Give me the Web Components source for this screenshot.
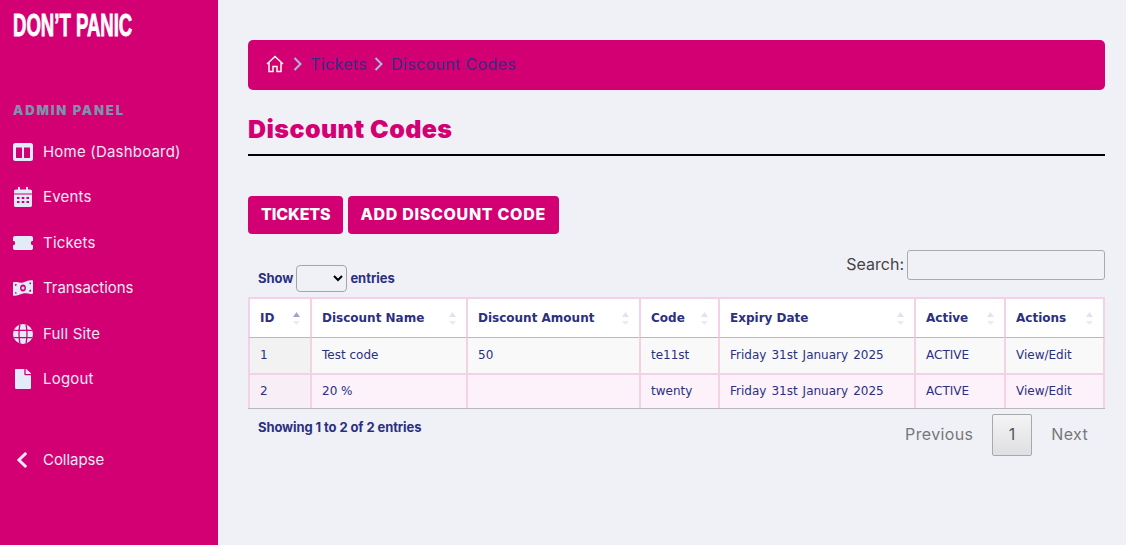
<!DOCTYPE html>
<html><head><meta charset="utf-8"><style>
html,body{margin:0;padding:0;height:100%;background:#f0f1f7;overflow:hidden}
body{font-family:Inter,"Liberation Sans",sans-serif}
</style></head><body>
<dp-app>
<dp-sidebar slot="side">
<dp-nav label="Home (Dashboard)" icon="home"></dp-nav>
<dp-nav label="Events" icon="cal"></dp-nav>
<dp-nav label="Tickets" icon="ticket"></dp-nav>
<dp-nav label="Transactions" icon="money" style="letter-spacing:-.05px"></dp-nav>
<dp-nav label="Full Site" icon="globe"></dp-nav>
<dp-nav label="Logout" icon="file"></dp-nav>
<dp-nav class="collapse" label="Collapse" icon="chev" style="letter-spacing:-.05px"></dp-nav>
</dp-sidebar>
<dp-crumbs></dp-crumbs>
<dp-title>Discount Codes</dp-title>
<dp-actions><dp-btn style="letter-spacing:-.1px;padding-right:12px">TICKETS</dp-btn><dp-btn style="letter-spacing:.68px">ADD DISCOUNT CODE</dp-btn></dp-actions>
<dp-table></dp-table>
</dp-app>
<script>
const def=(n,html,init)=>customElements.define(n,class extends HTMLElement{connectedCallback(){if(this.shadowRoot)return;this.attachShadow({mode:'open'}).innerHTML=typeof html==='function'?html(this):html;}});
def('dp-app',`<style>:host{display:grid;grid-template-columns:218px 1fr;height:545px}
main{padding:40px 21px 0 30px;min-width:0}</style><slot name="side"></slot><main><slot></slot></main>`);
def('dp-sidebar',`<style>:host{display:block;background:#d30074;height:545px;padding:12px 0 0 13px;box-sizing:border-box;color:#f1e8f3}
.logo{font:700 32px/27px "Liberation Sans",sans-serif;color:#fff;height:27px;width:190px;white-space:nowrap;-webkit-text-stroke:.9px #fff;transform-origin:0 0;transform:scaleX(.58)}
h2{margin:64px 0 0;font:900 13px/15px Inter,sans-serif;letter-spacing:1.85px;color:#7e93ab;height:15px}
nav{margin-top:11px}</style>
<div class="logo">DON’T PANIC</div><h2>ADMIN PANEL</h2><nav><slot></slot></nav>`);
const icons={
home:`<svg width="20" height="18" viewBox="0 0 20 18"><path fill-rule="evenodd" fill="#e2ebf8" d="M2.500 0h15A2.500 2.500 0 0 1 20 2.500v13a2.500 2.500 0 0 1-2.500 2.500h-15A2.500 2.500 0 0 1 0 15.500v-13A2.500 2.500 0 0 1 2.500 0zM3 4.500v10.500h6V4.500zM11 4.500v10.500h6V4.500z"/></svg>`,
cal:`<svg width="18" height="20" viewBox="0 0 18 20"><path fill="#e2ebf8" fill-rule="evenodd" d="M4 0h2v2.500h6V0h2v2.500h2.200c1 0 1.800.8 1.800 1.800V6.500H0V4.300c0-1 .8-1.800 1.800-1.800H4zM0 7.500h18v10.700c0 1-.8 1.800-1.800 1.800H1.800c-1 0-1.800-.8-1.800-1.800zM3 10v2h2.500v-2zM7.700 10v2h2.600v-2zM12.500 10v2H15v-2zM3 14v2h2.500v-2zM7.700 14v2h2.600v-2zM12.500 14v2H15v-2z"/></svg>`,
ticket:`<svg width="20" height="14" viewBox="0 0 20 14"><path fill="#e2ebf8" d="M2 0h16c1 0 2 .8 2 1.800V4.800a2.200 2.200 0 0 0 0 4.400v3c0 1-1 1.800-2 1.800H2c-1 0-2-.8-2-1.800v-3a2.200 2.200 0 0 0 0-4.400V1.800C0 .8 1 0 2 0z"/></svg>`,
money:`<svg width="20" height="16" viewBox="0 0 20 16"><path fill="#e2ebf8" fill-rule="evenodd" d="M0 2.500C3 1 6 3.500 10 2.500s6-3 10-2V13.500c-3 1.500-6-1-10 0s-7 3-10 2zM10 4.500c-1.900 0-3 1.600-3 3.500s1.100 3.500 3 3.500 3-1.600 3-3.500-1.100-3.500-3-3.500zM10 6.500a1.500 1.500 0 1 1 0 3 1.500 1.500 0 0 1 0-3zM2 4v2a2 2 0 0 0 2-1.800zM18 2.500v1.800a2 2 0 0 1-2-1.500zM2 12v1.500h2A2 2 0 0 0 2 12zM18 9.500a2 2 0 0 0-2 2l2 .2z"/></svg>`,
globe:`<svg width="20" height="20" viewBox="0 0 20 20"><defs><clipPath id="c"><circle cx="10" cy="10" r="10"/></clipPath></defs><g clip-path="url(#c)"><rect width="20" height="20" fill="#e2ebf8"/><path d="M0 6.400h20M0 13.600h20M7 0C5.800 6 5.800 14 7 20M13 0c1.200 6 1.200 14 0 20" stroke="#d30074" stroke-width="1.300" fill="none"/></g></svg>`,
file:`<svg width="16" height="20" viewBox="0 0 384 512" preserveAspectRatio="none"><path fill="#e2ebf8" d="M224 136V0H24C10.700 0 0 10.700 0 24v464c0 13.300 10.700 24 24 24h336c13.300 0 24-10.700 24-24V160H248c-13.200 0-24-10.800-24-24zm160-14.100v6.100H256V0h6.100c6.400 0 12.500 2.500 17 7l97.900 98c4.500 4.500 7 10.600 7 16.900z"/></svg>`,
chev:`<svg width="12" height="18" viewBox="0 0 320 512" preserveAspectRatio="none"><path fill="#e2ebf8" d="M34.520 239.030L228.870 44.690c9.370-9.370 24.570-9.370 33.940 0l22.670 22.670c9.360 9.360 9.370 24.520.04 33.900L131.490 256l154.020 154.750c9.340 9.380 9.320 24.540-.04 33.900l-22.670 22.670c-9.370 9.370-24.570 9.370-33.940 0L34.520 272.970c-9.370-9.370-9.370-24.570 0-33.940z"/></svg>`};
def('dp-nav',e=>`<style>:host{display:flex;align-items:center;height:45.500px;font:400 15px/20px Inter,sans-serif;color:#f1e8f3;letter-spacing:.2px}
:host(.collapse){margin-top:35px}
i{width:30px;flex:none;display:flex;padding-left:${{file:2,cal:1,chev:3}[e.getAttribute('icon')]||0}px;box-sizing:border-box}</style><i>${icons[e.getAttribute('icon')]}</i><span>${e.getAttribute('label')}</span>`);
def('dp-crumbs',`<style>:host{display:flex;align-items:center;height:50px;box-sizing:border-box;padding-bottom:2px;background:#d30074;border-radius:5px;padding-left:18px;font:400 16px/20px Inter,sans-serif;color:#302f80;letter-spacing:.35px}
svg{display:block}.c{margin:0 8px 0 9px}.c.b{margin:0 8px 0 7px}</style>
<svg width="18" height="18" viewBox="0 0 18 18" fill="none" stroke="#fffbe8" stroke-width="1.500"><path d="M1 9L9 1.500 17 9M3 7.500V16.500H7V11.500H11V16.500H15V7.500"/></svg>
<svg class="c" width="9" height="14" viewBox="0 0 9 14" fill="none" stroke="#a9bbd3" stroke-width="2"><path d="M1.500 1L7.500 7L1.500 13"/></svg><span>Tickets</span>
<svg class="c b" width="9" height="14" viewBox="0 0 9 14" fill="none" stroke="#a9bbd3" stroke-width="2"><path d="M1.500 1L7.500 7L1.500 13"/></svg><span>Discount Codes</span>`);
def('dp-title',`<style>:host{display:block;margin-top:24px;height:40px;border-bottom:2px solid #000;font:900 25px/30px Inter,sans-serif;color:#d30074;letter-spacing:.42px}</style><slot></slot>`);
def('dp-actions',`<style>:host{display:flex;gap:5px;margin-top:40px}</style><slot></slot>`);
def('dp-btn',`<style>:host{display:block;height:38px;padding:0 13px;background:#d30074;color:#fff;border-radius:4px;font:800 16px/37px Inter,sans-serif;white-space:nowrap}</style><slot></slot>`);
const cols=[62,156,173,79,196,90,101];
const heads=['ID','Discount Name','Discount Amount','Code','Expiry Date','Active','Actions'];
const rows=[['1','Test code','50','te11st','Friday 31st January 2025','ACTIVE','View/Edit'],['2','20 %','','twenty','Friday 31st January 2025','ACTIVE','View/Edit']];
const arrows=(a)=>`<svg class="s" width="9" height="15" viewBox="0 0 9 15"><path d="M4.500 1L8 6H1z" fill="${a?'#9fa5cc':'#e2e3f0'}"/><path d="M4.500 14L8 10H1z" fill="#e9eaf3"/></svg>`;
def('dp-table',`<style>:host{display:block;margin-top:16px;font:400 12px/14px "DejaVu Sans",Verdana,sans-serif;color:#2b3080}
.top{display:flex;justify-content:space-between;height:47px}
.len{font:700 13px/16px Inter,sans-serif;padding:10px 0 0 10px;display:flex;align-items:center;height:26px;gap:3px;box-sizing:border-box;margin-top:10px;letter-spacing:-.02px}
select{width:51px;height:27px;background:#f0f1f7;border:1px solid #a6a6a6;border-radius:4px;margin:0;padding:0;font-size:13px;color:#000}
.search{font:400 16px/20px Inter,sans-serif;color:#444;display:flex;align-items:center;gap:3px;height:30px}
.search span{padding-bottom:2px}
input{width:198px;height:30px;box-sizing:border-box;border:1px solid #aaa;border-radius:3px;background:#f0f1f7;margin:0}
table{border-collapse:separate;border-spacing:0;table-layout:fixed;width:857px;border-bottom:1px solid #b9b9b9}
th,td{padding:0 10px;text-align:left;border-top:2px solid #f5d1e6;border-left:2px solid #f5d1e6;box-sizing:border-box;white-space:nowrap}
th:last-child,td:last-child{border-right:2px solid #f5d1e6}
th{height:41px;background:#fff;font-weight:700;border-bottom:1px solid #b9b9b9;position:relative}
td{height:35px;padding-bottom:2px}tbody tr:first-child td{border-top:0}
td.d{word-spacing:1.200px}
tbody tr:nth-child(1) td{background:#f9f9f9}tbody tr:nth-child(1) td:first-child{background:#f2f2f2}
tbody tr:nth-child(2) td{background:#fdf2f9}tbody tr:nth-child(2) td:first-child{background:#f8eff6}
.s{position:absolute;right:9px;top:12px}
.bot{display:flex;justify-content:space-between;align-items:flex-start;margin-top:5px}
.info{font:700 13px/16px Inter,sans-serif;padding:5px 0 0 10px;letter-spacing:-.1px}
.pages{display:flex;align-items:center;font:400 16px/20px Inter,sans-serif;color:#777;height:42px;letter-spacing:.35px}
.pages span{padding:0 19px 3px}.pages span:last-child{padding-right:17px}
.pages b{font-weight:400;width:40px;height:42px;padding-bottom:3px;box-sizing:border-box;border:1px solid #a9a9a9;border-radius:2px;background:linear-gradient(#f4f4f6,#dfdfe3);display:flex;align-items:center;justify-content:center;color:#555}
</style>
<div class="top"><div class="len">Show <select></select> entries</div><div class="search"><span>Search:</span><input></div></div>
<table><colgroup>${cols.map(c=>`<col style="width:${c}px">`).join('')}</colgroup>
<thead><tr>${heads.map((h,i)=>`<th>${h}${arrows(i===0)}</th>`).join('')}</tr></thead>
<tbody>${rows.map(r=>`<tr>${r.map((c,i)=>`<td${i===4?' class="d"':''}>${c}</td>`).join('')}</tr>`).join('')}</tbody></table>
<div class="bot"><div class="info">Showing 1 to 2 of 2 entries</div><div class="pages"><span>Previous</span><b>1</b><span>Next</span></div></div>`);
</script>
</body></html>
